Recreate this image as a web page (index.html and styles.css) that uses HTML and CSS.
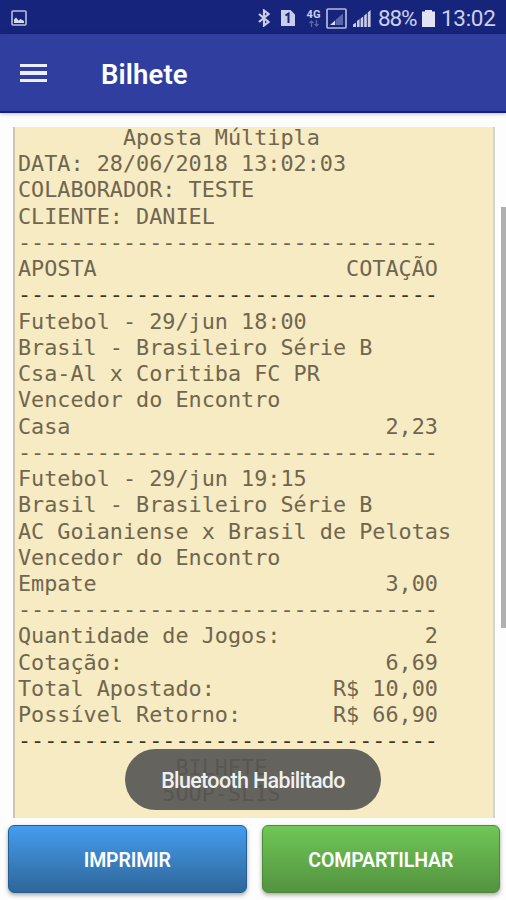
FILE: index.html
```html
<!DOCTYPE html>
<html lang="pt-BR">
<head>
    <meta charset="UTF-8">
    <meta name="viewport" content="width=device-width, initial-scale=1.0">
    <title>Bilhete</title>
    <link rel="stylesheet" href="styles.css">
</head>
<body>
    <div class="status">
        <svg class="ic_img" width="16" height="16" viewBox="0 0 16 16">
            <rect x="1" y="1" width="14" height="14" rx="1" fill="none" stroke="#b9bede" stroke-width="1.6"/>
            <path d="M3 13V9.500l2-2 2.500 3 2-1.500 3.500 2V13z" fill="#d5d8ee"/>
        </svg>
        <svg class="ic_bt" width="12" height="18" viewBox="0 0 12 18">
            <path d="M1 5l9.500 8L6 16.500V1.500L10.500 5 1 13" fill="none" stroke="#c9cde8" stroke-width="2.200"/>
        </svg>
        <svg class="ic_sim" width="16" height="18" viewBox="0 0 16 18">
            <path d="M1 1h9.500L15 5.500V17H1z" fill="#c9cde8"/>
            <path d="M5.500 6.500L8.500 4.500V14" fill="none" stroke="#17247c" stroke-width="2"/>
        </svg>
        <div class="rede">
            <span class="rede_4g">4G</span>
            <svg width="12" height="7" viewBox="0 0 12 7">
                <path d="M3.500 7V1M1.500 3l2-2 2 2M8.500 0v6M6.500 4l2 2 2-2" fill="none" stroke="#5f69a8" stroke-width="1.200"/>
            </svg>
        </div>
        <svg class="ic_sinal1" width="21" height="21" viewBox="0 0 21 21">
            <rect x="1" y="1" width="19" height="19" rx="1" fill="none" stroke="#b3b9dc" stroke-width="1.700"/>
            <path d="M4 17L9 12.500V17z" fill="#d5d8ee"/>
            <path d="M9.500 12L17 5.500V17H9.500z" fill="#5b66a8"/>
        </svg>
        <svg class="ic_sinal2" width="18" height="17" viewBox="0 0 18 17">
            <path d="M0 17v-2.500l3-2V17zM4 17v-6l2.600-2V17zM7.600 17V8.500l2.600-2V17zM11.200 17V5.500l2.600-2V17zM14.800 17V2.500L17.600 0v17z" fill="#c9cde8"/>
        </svg>
        <span class="bateria_txt">88%</span>
        <svg class="ic_bat" width="13" height="17" viewBox="0 0 13 17">
            <path d="M3 0h7v1.500h3V17H0V1.500h3z" fill="#e1e3f4"/>
        </svg>
        <span class="hora">13:02</span>
    </div>
    <div class="topo">
        <button class="menu">
            <span></span>
            <span></span>
            <span></span>
        </button>
        <h1 class="titre">Bilhete</h1>
    </div>
    <div class="main">
        <div class="papel">
<pre class="bilhete">        Aposta Múltipla
DATA: 28/06/2018 13:02:03
COLABORADOR: TESTE
CLIENTE: DANIEL
--------------------------------
APOSTA                   COTAÇÃO
<b>--------------------------------</b>
Futebol - 29/jun 18:00
Brasil - Brasileiro Série B
Csa-Al x Coritiba FC PR
Vencedor do Encontro
Casa                        2,23
--------------------------------
Futebol - 29/jun 19:15
Brasil - Brasileiro Série B
AC Goianiense x Brasil de Pelotas
Vencedor do Encontro
Empate                      3,00
--------------------------------
Quantidade de Jogos:           2
Cotação:                    6,69
Total Apostado:         R$ 10,00
Possível Retorno:       R$ 66,90
<b>--------------------------------</b>
            BILHETE
           5OOP-SL1S</pre>
        </div>
        <div class="scroll"></div>
        <div class="toast">Bluetooth Habilitado</div>
    </div>
    <div class="parent_btn">
        <button class="btn btn_imp">IMPRIMIR</button>
        <button class="btn btn_comp">COMPARTILHAR</button>
    </div>
</body>
</html>
```

FILE: styles.css
```css
* {
    box-sizing: border-box;
}

body {
    margin: 0;
    height: 900px;
    display: flex;
    flex-direction: column;
    background: #fdfdfd;
    font-family: Roboto, sans-serif;
    overflow: hidden;
}

.status {
    height: 34px;
    flex: none;
    display: flex;
    align-items: center;
    padding: 2px 11px 0 11px;
    background: #17247c;
    color: #cdd0ea;
    font-size: 22.5px;
}

.status svg {
    flex: none;
}

.ic_bt {
    margin-left: auto;
}

.ic_sim {
    margin-left: 10px;
}

.rede {
    display: flex;
    flex-direction: column;
    align-items: center;
    width: 15px;
    margin-left: 10px;
}

.rede_4g {
    font-size: 11px;
    line-height: 10px;
    font-weight: 700;
}

.ic_sinal1 {
    margin-left: 5px;
}

.ic_sinal2 {
    margin-left: 6px;
}

.bateria_txt {
    width: 40px;
    margin-left: 7px;
    letter-spacing: -1.1px;
}

.ic_bat {
    margin-left: 4px;
}

.hora {
    width: 54px;
    margin-left: 6px;
    letter-spacing: -0.3px;
    white-space: nowrap;
}

.topo {
    height: 79px;
    flex: none;
    display: flex;
    align-items: center;
    padding: 0 20px;
    background: #303f9f;
    border-bottom: 2px solid #0f1f8c;
    box-shadow: 0 1px 4px rgba(0, 0, 0, 0.25);
}

.menu {
    display: flex;
    flex-direction: column;
    gap: 4px;
    width: 27px;
    margin-top: 1px;
    padding: 0;
    border: none;
    background: none;
}

.menu span {
    width: 27px;
    height: 3.5px;
    background: #eceefa;
}

.titre {
    margin: 3px 0 0 54px;
    font-size: 27.5px;
    font-weight: 600;
    letter-spacing: 0.1px;
    color: #ffffff;
}

.main {
    position: relative;
    height: 705px;
    flex: none;
    padding: 14px 11px 0 13px;
}

.papel {
    height: 691px;
    overflow: hidden;
    background: #f7ebc3;
    border-left: 2px solid #cdc7b0;
    border-right: 2px solid #d3d3cf;
}

.bilhete {
    margin: -2px 0 0 3px;
    font-family: "DejaVu Sans Mono", monospace;
    font-size: 21.8px;
    line-height: 26.24px;
    color: #70664e;
}

.bilhete b {
    font-weight: 400;
    color: #3d3424;
}

.scroll {
    position: absolute;
    top: 94px;
    right: 0;
    width: 5px;
    height: 421px;
    background: #b0b0b0;
}

.toast {
    position: absolute;
    left: 125px;
    top: 636px;
    width: 256px;
    height: 61px;
    border-radius: 31px;
    background: rgba(84, 84, 82, 0.9);
    color: #f0f0f0;
    font-size: 21.5px;
    font-weight: 500;
    letter-spacing: -0.65px;
    line-height: 64px;
    text-align: center;
    white-space: nowrap;
}

.parent_btn {
    display: flex;
    gap: 15px;
    padding: 7px 6px 0 8px;
}

.btn {
    flex: 1;
    height: 68px;
    padding: 2px 0 0;
    border-radius: 6px;
    color: #ffffff;
    font-family: Roboto, sans-serif;
    font-size: 19.5px;
    font-weight: 600;
    letter-spacing: -0.15px;
    box-shadow: 0 2px 4px rgba(0, 0, 0, 0.35);
}

.btn_imp {
    background: linear-gradient(#449def, #2f6699);
    border: 1.5px solid #24608f;
}

.btn_comp {
    background: linear-gradient(#70c656, #53933f);
    border: 1.5px solid #4a8a38;
}
```
